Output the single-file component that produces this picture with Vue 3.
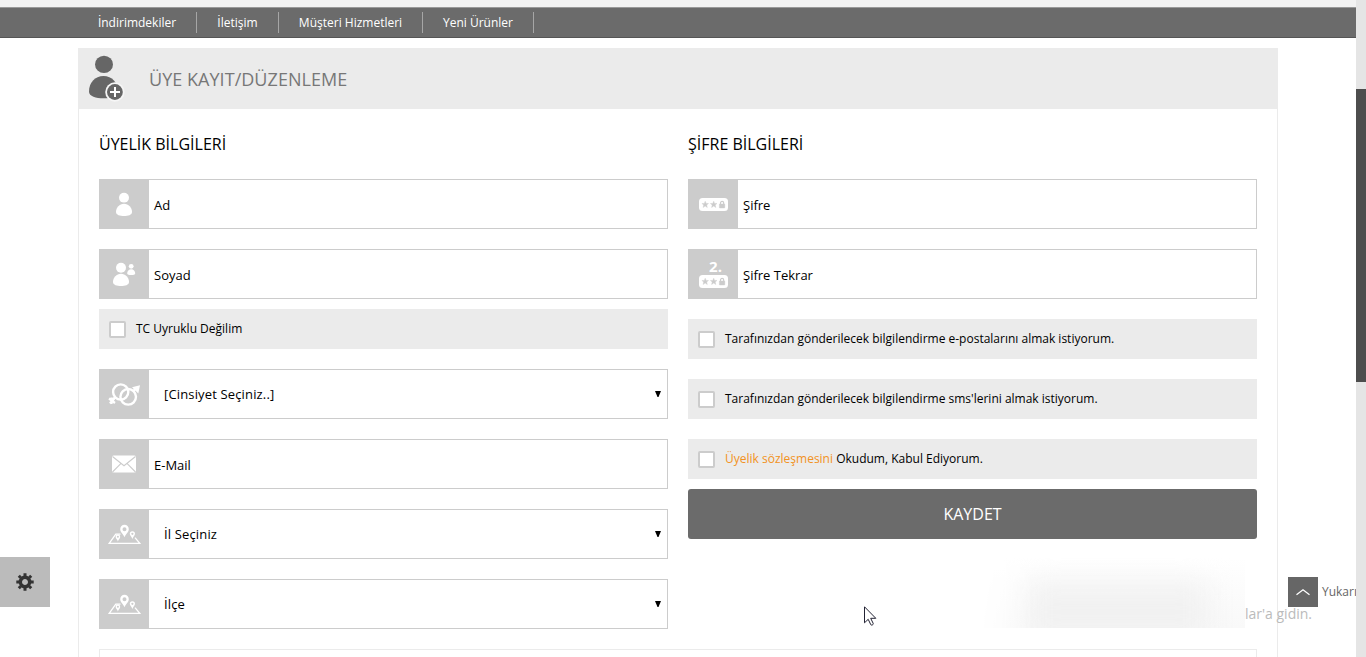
<script setup>
const links = [
  { text: 'İndirimdekiler', w: 119 },
  { text: 'İletişim', w: 82 },
  { text: 'Müşteri Hizmetleri', w: 144 },
  { text: 'Yeni Ürünler', w: 111 },
]
const fields = [
  { icon: 'person', label: 'Ad' },
  { icon: 'people', label: 'Soyad' },
  { check: true, label: 'TC Uyruklu Değilim' },
  { icon: 'gender', label: '[Cinsiyet Seçiniz..]', select: true },
  { icon: 'mail', label: 'E-Mail' },
  { icon: 'map', label: 'İl Seçiniz', select: true },
  { icon: 'map', label: 'İlçe', select: true },
]
const passwords = [
  { label: 'Şifre' },
  { label: 'Şifre Tekrar', second: true },
]
const agreements = [
  { text: 'Tarafınızdan gönderilecek bilgilendirme e-postalarını almak istiyorum.' },
  { text: "Tarafınızdan gönderilecek bilgilendirme sms'lerini almak istiyorum." },
  { link: 'Üyelik sözleşmesini', text: ' Okudum, Kabul Ediyorum.' },
]
</script>

<template>
  <div class="page">
    <div class="view">
      <div class="strip"></div>
      <nav class="bar">
        <a v-for="l in links" :key="l.text" :style="{ width: l.w + 'px' }">{{ l.text }}</a>
      </nav>

      <main class="panel">
        <header class="head">
          <svg class="member" width="42" height="50" viewBox="0 0 42 50">
            <ellipse cx="20" cy="10.400" rx="9" ry="8.600" fill="#666" />
            <path d="M5 37.500C5 28.500 11 22 19.500 22S34 28.500 34 37.500c0 5-7 6.800-14.500 6.800S5 42.500 5 37.500Z" fill="#666" />
            <circle cx="30.900" cy="38" r="9.700" fill="#f6f6f6" />
            <circle cx="30.900" cy="38" r="7.900" fill="#666" />
            <path d="M31 33v10M26 38h10" stroke="#fff" stroke-width="2" />
          </svg>
          <h1>ÜYE KAYIT/DÜZENLEME</h1>
        </header>

        <div class="body">
          <div class="cols">
            <section>
              <h2>ÜYELİK BİLGİLERİ</h2>
              <template v-for="(f, i) in fields" :key="i">
                <div v-if="f.check" class="check near"><i class="box"></i><span>{{ f.label }}</span></div>
                <div v-else class="field" :class="{ select: f.select }">
                  <div class="icon">
                    <svg width="50" height="50" viewBox="0 0 50 50" fill="#fff">
                      <g v-if="f.icon === 'person'">
                        <ellipse cx="25" cy="18.700" rx="5" ry="4.900" />
                        <path d="M17 33c0-4.500 3.500-8.200 8-8.200s8 3.700 8 8.200c0 3-4 4-8 4s-8-1-8-4Z" />
                      </g>
                      <g v-if="f.icon === 'people'">
                        <circle cx="22" cy="18.700" r="5" />
                        <path d="M14 33c0-4.500 3.500-8.200 8-8.200s8 3.700 8 8.200c0 3-4 4-8 4s-8-1-8-4Z" />
                        <circle cx="32.200" cy="17.300" r="2.400" />
                        <path d="M28.200 24.400c0-2.300 1.700-4.100 4-4.100s4 1.800 4 4.100c0 2-8 2-8 0Z" />
                      </g>
                      <g v-if="f.icon === 'gender'" fill="none" stroke="#fff">
                        <circle cx="21.700" cy="23" r="7.600" stroke-width="2.400" />
                        <circle cx="29.200" cy="27.800" r="7.800" stroke-width="2.400" />
                        <path d="m34.500 22 3-3.500" stroke-width="2.500" />
                        <path d="m33 18.200 8-2-1.700 8.300z" fill="#fff" stroke="none" />
                        <path d="m16 28.500-2.500 3" stroke-width="2.500" />
                        <path d="m10 29.500 6 4.500M15 29l-4 5.500M12.500 28.500v6.500" stroke-width="2.200" />
                      </g>
                      <g v-if="f.icon === 'mail'">
                        <rect x="13" y="16.500" width="24" height="17" rx="1.500" />
                        <path d="m13.500 17.500 11.500 9.300 11.500-9.300M13.500 33l8.300-8.300M36.500 33l-8.300-8.300" fill="none" stroke="#ccc" stroke-width="1.100" />
                      </g>
                      <g v-if="f.icon === 'map'">
                        <path d="M21.500 25.200h-4.700L10.200 34.400h30.600L36 28.600" fill="none" stroke="#fff" stroke-width="1.300" />
                        <path fill-rule="evenodd" d="M25.500 15.800a4.300 4.300 0 0 0-4.300 4.400c0 3 3 4.500 4.300 8 1.300-3.500 4.300-5 4.300-8a4.300 4.300 0 0 0-4.300-4.400Zm0 2.400a2 2 0 1 1 0 4 2 2 0 0 1 0-4Z" />
                        <path fill-rule="evenodd" d="M33.400 22.200a2.600 2.600 0 0 0-2.600 2.600c0 2 2 3 2.600 5.300.6-2.300 2.600-3.300 2.600-5.300a2.600 2.600 0 0 0-2.600-2.600Zm0 1.500a1.100 1.100 0 1 1 0 2.200 1.100 1.100 0 0 1 0-2.200Z" />
                        <path fill-rule="evenodd" d="M18.900 25.400a2.300 2.300 0 0 0-2.300 2.300c0 1.800 1.700 2.600 2.300 4.700.6-2.100 2.300-2.900 2.300-4.700a2.300 2.300 0 0 0-2.300-2.300Zm0 1.300a1 1 0 1 1 0 2 1 1 0 0 1 0-2Z" />
                      </g>
                    </svg>
                  </div>
                  <span>{{ f.label }}</span>
                  <svg v-if="f.select" class="arrow" width="6" height="6" viewBox="0 0 6 6"><path d="M0 0h6L3.500 6h-1z" /></svg>
                </div>
              </template>
            </section>

            <section>
              <h2>ŞİFRE BİLGİLERİ</h2>
              <div v-for="p in passwords" :key="p.label" class="field">
                <div class="icon pass">
                  <b v-if="p.second">2.</b>
                  <svg width="29" height="13" viewBox="0 0 29 13">
                    <rect width="29" height="13" rx="3.500" fill="#fff" />
                    <g fill="#ccc" stroke="#ccc" stroke-width=".4">
                      <path d="m6.200 3.200.9 2.200 2.400.1-1.800 1.500.6 2.500-2.100-1.400-2.100 1.400.6-2.500-1.800-1.500 2.400-.1z" />
                      <path d="m14.700 3.200.9 2.200 2.400.1-1.800 1.500.6 2.500-2.100-1.400-2.100 1.400.6-2.500-1.800-1.500 2.400-.1z" />
                      <rect x="20.400" y="6" width="5.400" height="4" rx=".5" />
                    </g>
                    <path d="M21.500 6.200V5a1.600 1.600 0 0 1 3.200 0v1.200" fill="none" stroke="#ccc" stroke-width="1.200" />
                  </svg>
                </div>
                <span>{{ p.label }}</span>
              </div>
              <div v-for="a in agreements" :key="a.text" class="check">
                <i class="box"></i><span><a v-if="a.link">{{ a.link }}</a>{{ a.text }}</span>
              </div>
              <button class="save">KAYDET</button>
            </section>
          </div>
          <div class="next"></div>
        </div>
      </main>
    </div>
    <aside class="track"><div class="thumb"></div></aside>

    <div class="watermark">lar'a gidin.</div>
    <div class="smudge"><i></i></div>
    <div class="gear">
      <svg width="18" height="18" viewBox="-9 -9 18 18">
        <circle r="4.700" fill="none" stroke="#333" stroke-width="3.400" />
        <path d="M0-8.700v3M0 5.700v3M-8.700 0h3M5.700 0h3M-6.200-6.200l2 2M6.200-6.200l-2 2M-6.200 6.200l2-2M6.200 6.200l-2-2" stroke="#333" stroke-width="3" />
      </svg>
    </div>
    <div class="up">
      <div class="upbox"><svg width="16" height="8" viewBox="0 0 16 8"><path d="m1.500 6.700 6.500-5 6.500 5" fill="none" stroke="#fff" stroke-width="1.300" /></svg></div>
      <span>Yukarı</span>
    </div>
    <svg class="cursor" width="13" height="20" viewBox="0 0 13 20">
      <path d="M.5.800v16l3.700-3.500 2.600 5.400c.5 1 3 0 2.400-1.300L6.700 12.300h5.100z" fill="#fff" stroke="#223" stroke-width="1" />
    </svg>
  </div>
</template>

<style>
html, body { overflow: hidden; }
</style>
<style scoped>
* { box-sizing: border-box; }
.page {
  position: relative; display: flex; width: 1366px; height: 657px; overflow: hidden;
  background: #fff; color: #000; font-family: "Open Sans", "Noto Sans", sans-serif; font-size: 13px;
}
.view { flex: 1; height: 657px; overflow: hidden; }
.strip { height: 7px; background: #f2f2f2; }
.bar {
  height: 31px; display: flex; align-items: center; padding-left: 78px;
  background: #6b6b6b; border-top: 1px solid #999; border-bottom: 1px solid #555;
}
.bar a {
  height: 21px; line-height: 21px; border-right: 1px solid #a6a6a6; text-align: center;
  color: #fff; font-size: 12px; white-space: nowrap;
}
.panel { width: 1200px; margin: 10px 0 0 78px; }
.head { height: 61px; display: flex; align-items: flex-start; background: #ebebeb; padding: 6px 0 0 6px; }
.member { display: block; }
h1 { margin: 12px 0 0 23px; font-size: 18px; line-height: 26px; font-weight: 400; color: #777; letter-spacing: .04px; }
.body { border: solid #ebebeb; border-width: 0 1px; padding: 25px 20px 0; height: 600px; }
.cols { display: flex; gap: 20px; height: 515px; }
section { width: 569px; }
h2 { margin: 0 0 25px; font-size: 16px; line-height: 20px; font-weight: 400; }
.field { height: 50px; margin-bottom: 20px; display: flex; align-items: center; border: 1px solid #ccc; }
.icon { width: 50px; height: 50px; margin-left: -1px; background: #ccc; flex: none; }
.icon svg { display: block; }
.field > span { padding: 1px 0 0 5px; flex: 1; line-height: 18px; }
.field.select > span { padding: 0 0 1px 15px; letter-spacing: .15px; }
.arrow { margin-right: 6px; display: block; }
.pass { display: flex; flex-direction: column; align-items: center; justify-content: center; padding-left: 1px; }
.pass b { color: #fff; font-size: 15px; line-height: 13px; padding: 0 0 2px 4px; }
.check { height: 40px; margin-bottom: 20px; background: #ebebeb; display: flex; align-items: center; padding-left: 10px; font-size: 12px; }
.check.near { margin-top: -10px; }
.box { width: 17px; height: 17px; border: 2px solid #ccc; border-radius: 2px; background: #fff; margin: 1px 10px 0 0; }
.check span { line-height: 18px; white-space: pre; }
.check a { color: #f29222; }
.save {
  display: block; width: 569px; height: 50px; margin-top: -10px; padding: 0; border: 0; border-radius: 3px;
  background: #6b6b6b; color: #fff; font: 400 16px "Open Sans", sans-serif;
}
.next { height: 60px; border: 1px solid #ebebeb; }
.track { width: 10px; background: #e5e5e5; padding-top: 89px; }
.thumb { height: 293px; background: #4d4d4d; }
.watermark { position: absolute; left: 1245px; top: 604px; font-size: 14px; line-height: 20px; color: #bbb; white-space: nowrap; }
.smudge { position: absolute; left: 980px; top: 558px; width: 265px; height: 70px; background: linear-gradient(#fff, #fdfdfd 30%, #f9f9f9); overflow: hidden; -webkit-mask-image: linear-gradient(90deg, transparent, #000 20%); mask-image: linear-gradient(90deg, transparent, #000 20%); }
.smudge i { position: absolute; left: 48px; top: 24px; width: 180px; height: 60px; background: #f1f1f1; filter: blur(14px); }
.gear { position: absolute; left: 0; top: 557px; width: 50px; height: 50px; background: #bbb; display: flex; align-items: center; justify-content: center; }
.up { position: absolute; left: 1288px; top: 577px; width: 68px; height: 30px; overflow: hidden; display: flex; align-items: center; font-size: 12px; color: #666; }
.up span { padding-bottom: 1px; }
.upbox { width: 30px; height: 30px; background: #666; flex: none; display: flex; align-items: center; justify-content: center; margin-right: 4px; }
.cursor { position: absolute; left: 864px; top: 606px; }
</style>
